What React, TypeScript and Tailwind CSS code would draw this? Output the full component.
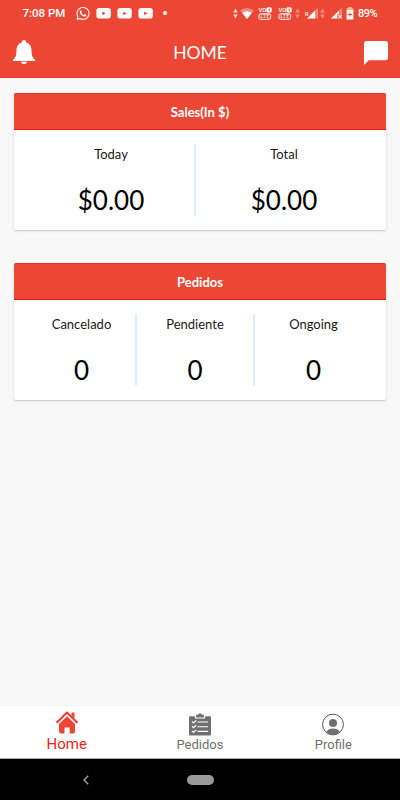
import React from 'react';
import { FaWhatsapp } from 'react-icons/fa';

const YouTube = () => (
  <svg className="ml-[6px] h-[11px] w-[15px]" viewBox="0 0 15 11">
    <rect x=".4" width="14.4" height="10.600" rx="2.800" fill="#fff" />
    <path d="M6.200 3.700 9.600 5.400 6.200 7.100Z" fill="#ec3524" />
  </svg>
);

const Arrows = ({ className }: { className: string }) => (
  <svg className={`h-[11px] w-[5px] ${className}`} viewBox="0 0 5 11" fill="currentColor">
    <path d="M2.5 0.5 4.8 4.5H.2ZM2.5 10.5 4.8 6.5H.2Z" />
  </svg>
);

const VoLte = ({ className }: { className: string }) => (
  <svg className={`h-[13px] w-[14px] ${className}`} viewBox="0 0 14 13" fontFamily="Roboto, sans-serif" fontWeight="500">
    <text x="0.400" y="5.400" fontSize="6" textLength="8" fill="#fff">VO</text>
    <rect x="8.4" y="0.3" width="5.3" height="5.3" rx="1.5" fill="#fff" />
    <path d="M11.2 1.3v3.2" stroke="#ec4734" strokeWidth="1" />
    <rect x="0.9" y="6.8" width="11.8" height="5.5" rx="1.8" fill="none" stroke="#fff" strokeWidth="1" />
    <text x="2.6" y="11.2" fontSize="4.6" textLength="8.4" fill="#fff">LTE</text>
  </svg>
);

function StatusBar() {
  return (
    <div className="flex h-[26px] items-center pl-[22.500px] pr-[22px] font-[Roboto,sans-serif] text-white">
      <span className="w-[53.500px] whitespace-nowrap text-[11.500px] font-medium leading-[26px]">7:08 PM</span>
      <FaWhatsapp className="h-[15px] w-[14px]" />
      <YouTube />
      <YouTube />
      <YouTube />
      <span className="ml-[10px] h-[4px] w-[4px] rounded-full bg-white" />
      <Arrows className="ml-auto text-white/80" />
      <svg className="ml-[2px] h-[11px] w-[14px]" viewBox="0 0 14 11" fill="#fff">
        <path d="M0 2.5Q7-2.5 14 2.5L7 11Z" opacity=".35" />
        <path d="M2 4.8Q7 1.8 12 4.8L7 11Z" />
      </svg>
      <VoLte className="ml-[4px]" />
      <VoLte className="ml-[6px]" />
      <Arrows className="ml-[3px] text-white/40" />
      <svg className="ml-[5px] h-[12px] w-[13px]" viewBox="0 0 13 12">
        <path d="M2 11.5 13 .5V11.5Z" fill="#fff" opacity=".35" />
        <path d="M2 11.5 10 3.5V11.5Z" fill="#fff" />
        <text x="-.1" y="9" fontSize="5.500" fontWeight="500" fontFamily="Roboto, sans-serif" fill="#fff" stroke="#ec4734" strokeWidth="1.2" paintOrder="stroke">R</text>
      </svg>
      <Arrows className="ml-[2px] text-white/40" />
      <svg className="ml-[6px] h-[12px] w-[12px]" viewBox="0 0 12 12">
        <path d="M0 11.5 11 .5V11.5Z" fill="#fff" opacity=".35" />
        <path d="M0 11.5 8 3.5V7H6V11.5Z" fill="#fff" />
        <path d="m7.5 8 3.5 3.5m0-3.5-3.5 3.5" stroke="#fff" />
      </svg>
      <svg className="ml-[3px] h-[13px] w-[8px] shrink-0" viewBox="0 0 8 13">
        <path d="M2.300 0h3.400v1.200H7.400V4H.6V1.200H2.300Z" fill="#f8b596" />
        <path d="M.6 3H7.400V12.500H.6Z" fill="#fff" />
        <path d="M4 5.500V9.500M2 7.500H6" stroke="#ec4734" />
      </svg>
      <span className="ml-[4px] w-[20px] whitespace-nowrap text-[11px] font-medium leading-[27px] tracking-[-0.500px]">89%</span>
    </div>
  );
}

function Header() {
  return (
    <header className="h-[78px] border-b border-[#e93a26] bg-[#ec4734] text-white">
      <StatusBar />
      <div className="flex h-[52px] items-center justify-between px-[12px]">
        <svg className="-mt-[1px] h-[24px] w-[24px]" viewBox="0 0 24 24" fill="#fff">
          <path d="M12 0c-1.500 0-2.300 1-2.100 2.400C6.200 3.400 4.600 6.400 4.500 10c-.1 5.500-1 8-3.500 9.500V21H23v-1.500c-2.500-1.500-3.400-4-3.500-9.500-.1-3.600-1.700-6.600-5.400-7.600C14.300 1 13.500 0 12 0ZM9 21.700h6c-.3 1.500-1.400 2.300-3 2.300s-2.700-.8-3-2.300Z" />
        </svg>
        <h1 className="pt-[2px] text-[17.500px] leading-[52px]">HOME</h1>
        <svg className="mt-[1px] h-[24px] w-[24px]" viewBox="0 0 24 24" fill="#fff">
          <path d="M2.400 0H21.600A2.400 2.400 0 0 1 24 2.400V16.900A2.400 2.400 0 0 1 21.600 19.300H4.800L0 24V2.400A2.400 2.400 0 0 1 2.400 0Z" />
        </svg>
      </div>
    </header>
  );
}

interface Stat {
  label: string;
  value: string;
  width: string;
}

function StatCard({ title, stats }: { title: string; stats: Stat[] }) {
  return (
    <section className="h-[137px] rounded-[2px] bg-white shadow-[0_1px_2px_rgba(0,0,0,0.22)]">
      <h2 className="h-[37px] rounded-t-[2px] border-y border-t-[#ec2c1c] border-b-[#ef1c0e] bg-[#ec4734] text-center text-[13px] font-bold leading-[37px] text-white">{title}</h2>
      <div className="flex pl-[14px] pt-[14px]">
        {stats.map(({ label, value, width }, i) => (
          <div key={label} className={`flex h-[72px] flex-col items-center text-black ${width} ${i < stats.length - 1 ? 'border-r-2 border-[#dceefc]' : ''}`}>
            <span className="text-[13px] leading-[20px] text-[#1a1a1a]">{label}</span>
            <span className="mt-[20px] text-[26px] leading-[32px]">{value}</span>
          </div>
        ))}
      </div>
    </section>
  );
}

function NavBar() {
  return (
    <nav className="grid h-[54px] grid-cols-3 border-b border-t border-b-[#aaa] border-t-[#f1f1f1] bg-white font-[Roboto,sans-serif] text-[13px] text-[#707070]">
      <div className="flex flex-col items-center pt-[5px] text-[#ee2619]">
        <svg className="h-[23px] w-[22px]" viewBox="0 0 22 23">
          <path d="M1.200 11.200 11 1.500 20.800 11.200" fill="none" stroke="#ec3a29" strokeWidth="2" strokeLinecap="round" strokeLinejoin="round" />
          <path d="M15.500 1.500H18.500V7.800L15.500 4.800Z" fill="#ec4734" />
          <path d="M3 13 11 5.300 19 13V20.500Q19 22.500 17 22.500H13.700V16.500H8.500V22.500H5Q3 22.500 3 20.500Z" fill="#ec4734" />
        </svg>
        <span className="text-[15px] leading-[20px]">Home</span>
      </div>
      <div className="flex flex-col items-center pt-[7px]">
        <svg className="h-[23px] w-[22px]" viewBox="0 0 22 23">
          <path d="M1 3.200H6V5.500H16V3.200H21Q22 3.200 22 4.200V21.500Q22 22.500 21 22.500H1Q0 22.500 0 21.500V4.200Q0 3.200 1 3.200Z" fill="#707070" />
          <path d="M7 1.800H9Q9.400.3 11 .3T13 1.800H15V4.500H7Z" fill="#707070" />
          <path d="M8.500 9H19M8.500 13.700H19M8.500 18.400H19" stroke="#fff" strokeWidth="1.100" />
          <path d="m3 8.500 1.500 1.500L7.200 7.500M3 13.200 4.500 14.700 7.200 12.200M3 17.900 4.500 19.400 7.200 16.900" fill="none" stroke="#fff" strokeWidth="1.200" />
        </svg>
        <span className="leading-[17px]">Pedidos</span>
      </div>
      <div className="flex flex-col items-center pt-[7px]">
        <svg className="h-[23px] w-[22px]" viewBox="0 0 22 23">
          <circle cx="11" cy="11.500" r="10.400" fill="none" stroke="#555" />
          <circle cx="11" cy="10" r="4" fill="#707070" />
          <path d="M4.200 19C5.500 16.400 8 15.400 11 15.400s5.500 1 6.800 3.600Q15 22 11 22T4.200 19Z" fill="#707070" />
        </svg>
        <span className="leading-[17px]">Profile</span>
      </div>
    </nav>
  );
}

export default function App() {
  return (
    <div className="flex h-[800px] w-[400px] flex-col overflow-hidden bg-[#f8f8f8] font-[Lato,sans-serif]">
      <Header />
      <main className="flex flex-1 flex-col gap-[33px] px-[14px] pt-[15px]">
        <StatCard
          title="Sales(In $)"
          stats={[
            { label: 'Today', value: '$0.00', width: 'w-[168px]' },
            { label: 'Total', value: '$0.00', width: 'w-[176px]' },
          ]}
        />
        <StatCard
          title="Pedidos"
          stats={[
            { label: 'Cancelado', value: '0', width: 'w-[109px]' },
            { label: 'Pendiente', value: '0', width: 'w-[118px]' },
            { label: 'Ongoing', value: '0', width: 'w-[117px]' },
          ]}
        />
      </main>
      <NavBar />
      <div className="grid h-[41px] grid-cols-[172px_56px_172px] items-center bg-black">
        <svg className="ml-[83px] h-[10px] w-[6px]" viewBox="0 0 6 10">
          <path d="M5.200.8 1 5 5.200 9.200" fill="none" stroke="#999" strokeWidth="1.500" />
        </svg>
        <span className="h-[10px] w-[27px] justify-self-center rounded-full bg-[#999]" />
      </div>
    </div>
  );
}
